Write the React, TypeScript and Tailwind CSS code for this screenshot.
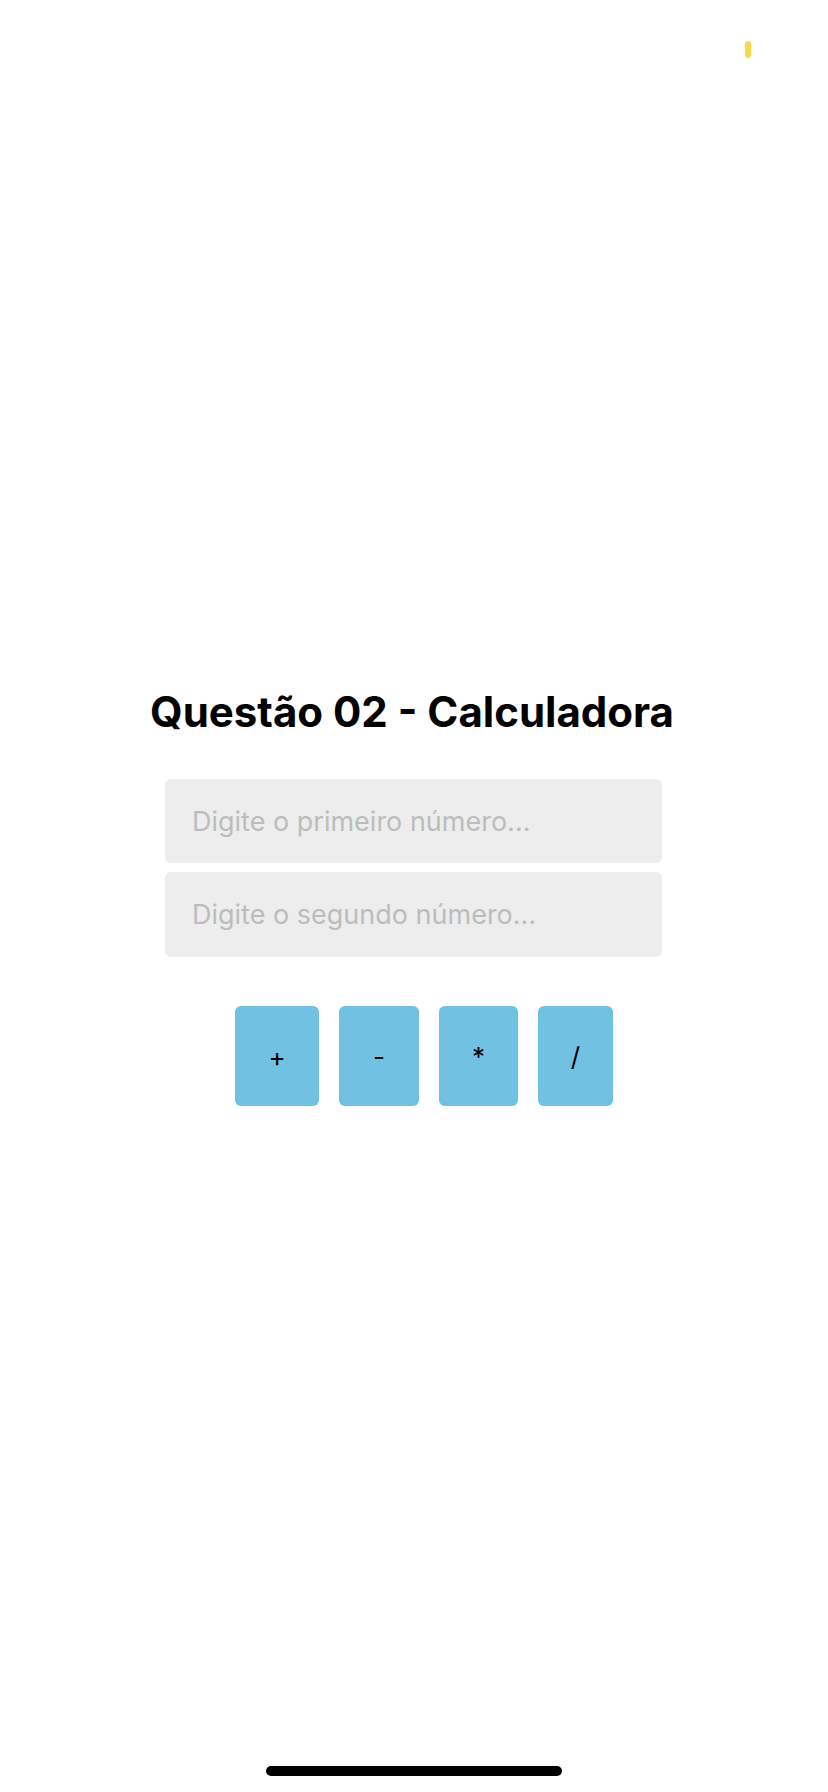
import { useState } from "react";

const ops = [
  { label: "+", width: "w-[84px]" },
  { label: "-", width: "w-[80px]" },
  { label: "*", width: "w-[79px]" },
  { label: "/", width: "w-[75px]" },
];

export default function App() {
  const [first, setFirst] = useState("");
  const [second, setSecond] = useState("");

  return (
    <div
      className="relative w-[828px] h-[1792px] bg-white overflow-hidden"
      style={{ fontFamily: "Inter, 'Noto Sans', sans-serif" }}
    >
      {/* status bar dot */}
      <div className="absolute left-[745px] top-[41px] w-[6px] h-[17px] rounded-full bg-[#fbd74a]" />

      <div className="flex flex-col pt-[686px]">
        <h1 className="pr-[4px] text-center text-[42px] leading-[51px] font-bold text-black">
          Questão 02 - Calculadora
        </h1>

        <div className="mt-[42px] ml-[165px] w-[497px] flex flex-col gap-[9px]">
          <input
            value={first}
            onChange={(e) => setFirst(e.target.value)}
            placeholder="Digite o primeiro número..."
            className="h-[84px] w-full rounded-[6px] bg-[#ededed] px-[27px] text-[27px] text-black placeholder:text-[#bcbcbc] outline-none"
          />
          <input
            value={second}
            onChange={(e) => setSecond(e.target.value)}
            placeholder="Digite o segundo número..."
            className="h-[85px] w-full rounded-[6px] bg-[#ededed] px-[27px] text-[27px] text-black placeholder:text-[#bcbcbc] outline-none"
          />
        </div>

        <div className="mt-[49px] ml-[235px] flex gap-[20px]">
          {ops.map((op) => (
            <button
              key={op.label}
              type="button"
              className={`${op.width} h-[100px] rounded-[6px] bg-[#70c1e2] text-[26px] text-black flex items-center justify-center`}
            >
              {op.label}
            </button>
          ))}
        </div>
      </div>

      {/* home indicator */}
      <div className="absolute left-[266px] top-[1766px] w-[296px] h-[10px] rounded-full bg-black" />
    </div>
  );
}
